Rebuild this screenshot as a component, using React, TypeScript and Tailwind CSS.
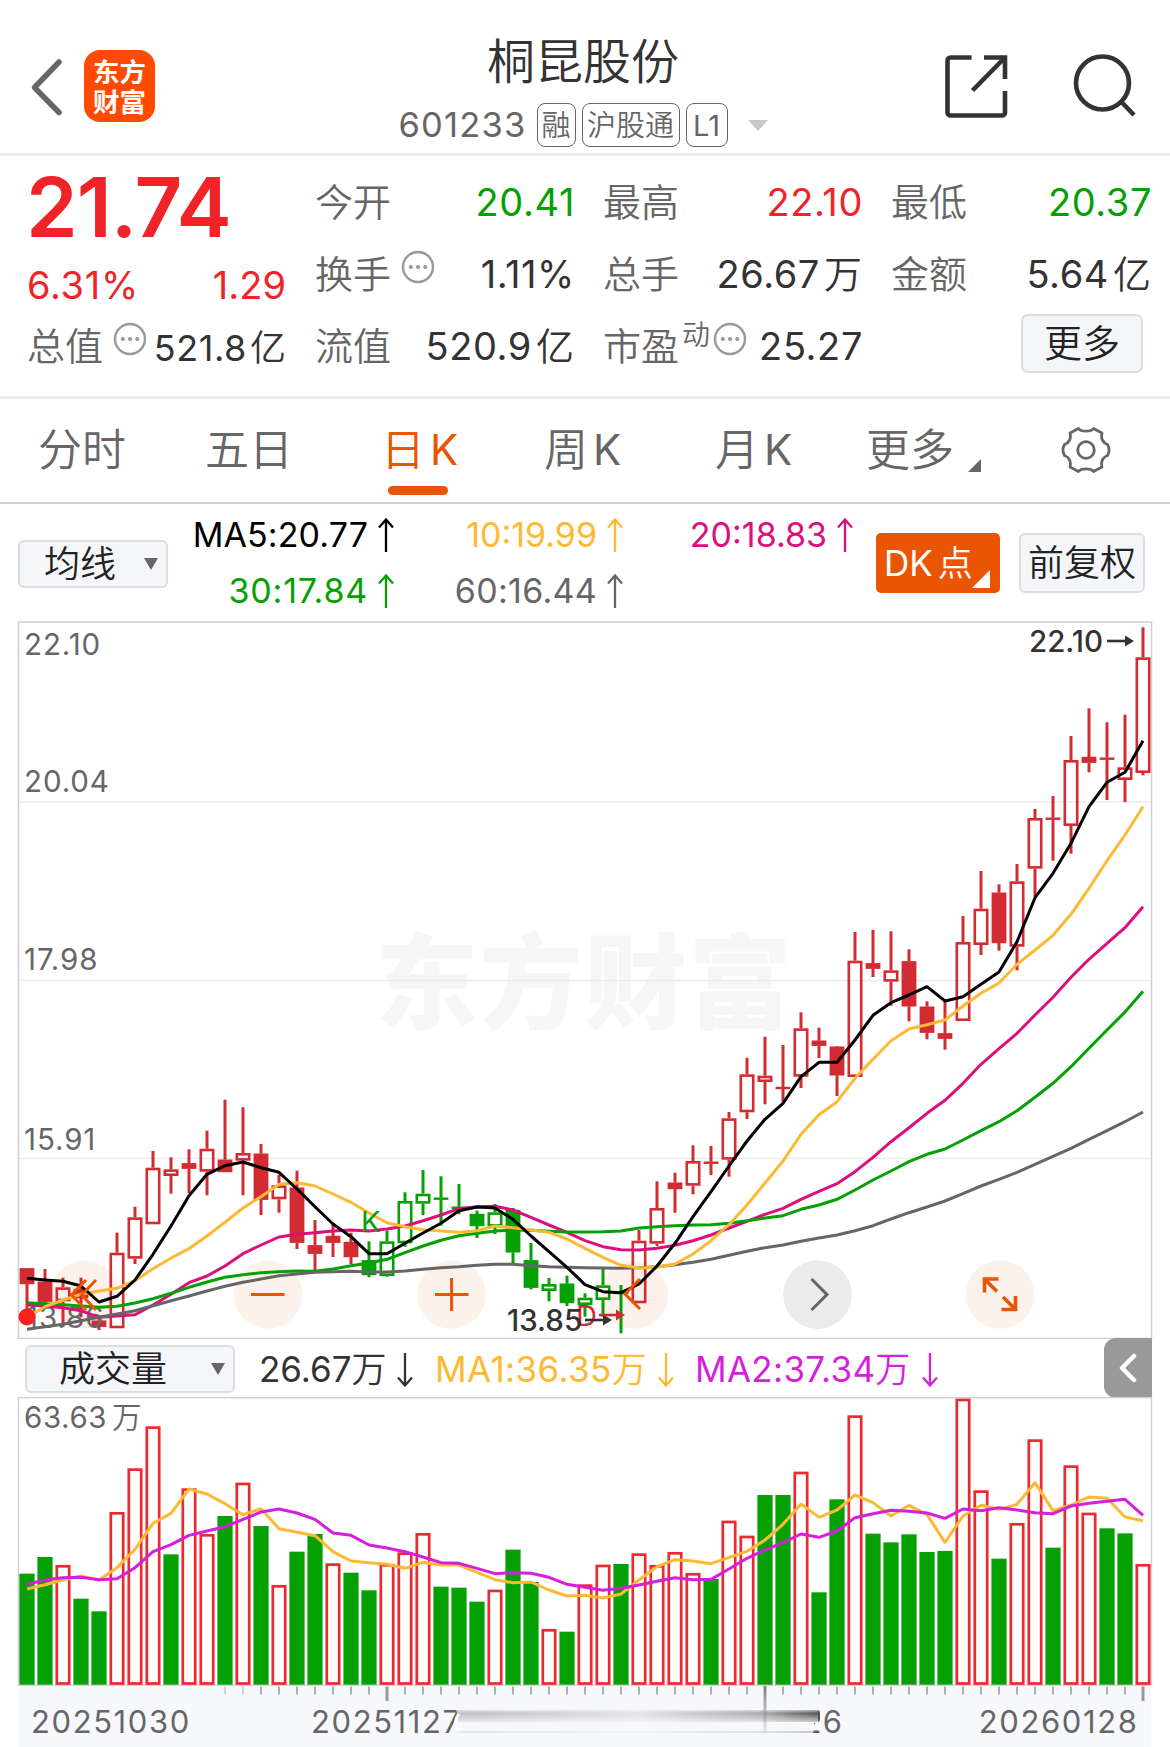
import type { ReactNode } from 'react';

type CandleKind = 'up' | 'solid';

interface Candle {
  kind: CandleKind;
  high: number;
  top: number;
  bottom: number;
  low: number;
}

const RED = '#d22b31';
const GREEN = '#04a004';
const ORANGE = '#ea5504';
const YELLOW = '#fdb934';
const MAGENTA = '#dc0f7d';
const PURPLE = '#d61fdc';

const STEP = 18;
const FIRST_X = 27;
const xAt = (i: number) => FIRST_X + i * STEP;

// candles 19-33 are inside the K..D window and are painted green
const isGreen = (i: number) => i >= 19 && i <= 33;

// [hollow ? 1 : 0, high, top, bottom, low]
const RAW_CANDLES: [number, number, number, number, number][] = [
  [0, 1268.3, 1268.3, 1284, 1313],
  [0, 1269, 1281.7, 1301.7, 1304],
  [1, 1277.7, 1287.3, 1301.3, 1326.7],
  [0, 1277.7, 1289, 1298, 1317.3],
  [0, 1315, 1320.7, 1326.7, 1330],
  [1, 1232.7, 1252.7, 1328.3, 1328.3],
  [1, 1206.7, 1217.3, 1258.7, 1264],
  [1, 1151, 1167.7, 1224.3, 1224.3],
  [1, 1157.3, 1169.3, 1176, 1193.7],
  [0, 1149.3, 1163.3, 1168.7, 1193],
  [1, 1130.7, 1148.7, 1171.7, 1195.3],
  [0, 1099.7, 1159.7, 1172, 1172],
  [1, 1107.3, 1153, 1160.7, 1195.3],
  [0, 1144, 1153.7, 1199.7, 1215],
  [1, 1175, 1185.3, 1199.3, 1212.7],
  [0, 1170.7, 1187.7, 1242.7, 1249],
  [0, 1220, 1245.3, 1253.7, 1270.7],
  [0, 1223.3, 1236, 1242.7, 1257],
  [0, 1232.7, 1242, 1257, 1264],
  [0, 1241.3, 1260.3, 1275, 1277.3],
  [1, 1230.7, 1241.3, 1276, 1276.7],
  [1, 1192.3, 1201, 1243.3, 1246.7],
  [1, 1170, 1193.7, 1203.7, 1215],
  [0, 1176.3, 1197.7, 1199.7, 1225.7],
  [0, 1184, 1206.7, 1209, 1214.3],
  [0, 1210.7, 1214, 1226, 1238],
  [1, 1204, 1212.3, 1226.7, 1234],
  [0, 1208, 1210, 1252.3, 1264],
  [0, 1243, 1260.3, 1287.7, 1289.3],
  [1, 1278, 1284, 1291, 1301.3],
  [0, 1275.7, 1283.7, 1303, 1306],
  [1, 1293.3, 1297.7, 1305, 1316.7],
  [1, 1267.3, 1285.3, 1300, 1316.7],
  [0, 1285, 1292, 1294, 1333.3],
  [1, 1230, 1240.7, 1303.3, 1303.3],
  [1, 1181.3, 1208, 1243.7, 1246],
  [0, 1172.7, 1182.7, 1189, 1212.7],
  [1, 1145.3, 1161, 1185.7, 1194.3],
  [0, 1146, 1161.7, 1163.7, 1175],
  [1, 1112, 1118.3, 1159.7, 1176.7],
  [1, 1057.7, 1074.3, 1112.3, 1119],
  [1, 1036.7, 1075.7, 1082, 1104.3],
  [0, 1045, 1087, 1089, 1101.7],
  [1, 1012.3, 1028.3, 1076.7, 1088],
  [0, 1027.7, 1040.7, 1045.7, 1058],
  [0, 1046, 1046.7, 1075.3, 1096],
  [1, 932, 960.7, 1077, 1077],
  [0, 930, 963.3, 968.7, 977],
  [1, 931.3, 970.3, 981.7, 1005.7],
  [0, 949.3, 961.3, 1006.3, 1021.3],
  [0, 1001.3, 1006.7, 1032.7, 1039.3],
  [0, 1000, 1033.3, 1038.7, 1049.7],
  [1, 916, 942, 1021, 1021],
  [1, 871, 908.7, 945, 955],
  [0, 884.3, 892.7, 943, 950.7],
  [1, 864, 881.3, 946.7, 970.3],
  [1, 809, 818, 868.7, 896.7],
  [0, 796, 817.7, 819.7, 860.7],
  [1, 736, 760, 826, 853.7],
  [0, 708.3, 757, 762.7, 772.3],
  [0, 722.3, 757.7, 759.7, 800],
  [1, 714.7, 767.3, 780, 802],
  [1, 627.3, 657.3, 773, 775.3],
];

const CANDLES: Candle[] = RAW_CANDLES.map(([hollow, high, top, bottom, low]) => ({
  kind: hollow ? 'up' : 'solid',
  high,
  top,
  bottom,
  low,
}));

const MA5 = [
  1278.3, 1280, 1281.3, 1286, 1302, 1296.3, 1280, 1254.3, 1226, 1195.7, 1174.3, 1165.7, 1162, 1167.7, 1172.3,
  1189, 1206.7, 1224, 1236.7, 1253.7, 1253.7, 1243.3, 1233, 1223.3, 1210.7, 1207, 1208, 1219.3, 1236, 1251.7,
  1267.3, 1284.7, 1291.7, 1292.7, 1284, 1266, 1243.3, 1216.7, 1191.7, 1166, 1141, 1119.3, 1103.3, 1076.7, 1062.3,
  1062.3, 1040, 1015.3, 1002.7, 995, 986.7, 1001, 996.7, 984.3, 972, 941.7, 897.7, 873.3, 843.3, 806.7, 782.3,
  772.3, 740.7,
];
const MA10 = [
  1317.3, 1306.7, 1300, 1294.3, 1291, 1288.3, 1280.7, 1268.7, 1258, 1248.7, 1236, 1222.3, 1208, 1196.7, 1184.3,
  1182.7, 1186, 1194, 1202.3, 1213, 1222.7, 1226.7, 1229.7, 1231, 1232.3, 1230.7, 1226, 1227.7, 1230, 1232.3,
  1239, 1248.3, 1257.3, 1265.3, 1268, 1267.3, 1264, 1254, 1240.7, 1224.7, 1205, 1183, 1161, 1134.3, 1114.7,
  1101.7, 1078.3, 1059.3, 1040.7, 1029, 1024.7, 1020, 1006, 993.3, 983, 964.3, 950, 935.3, 914.3, 888.3, 860.7,
  835, 806.7,
];
const MA20 = [
  1304.7, 1306, 1307.7, 1310.7, 1317.3, 1316, 1314.7, 1305, 1294.3, 1282.7, 1276, 1266, 1253.7, 1245, 1237,
  1234.3, 1232.7, 1231, 1230, 1231, 1229, 1226, 1220.7, 1215, 1208.7, 1206.7, 1206.3, 1210, 1217.3, 1225,
  1232.3, 1240.7, 1246.7, 1249.7, 1250, 1248.3, 1245.3, 1240.7, 1235, 1228, 1221.3, 1214.3, 1208.3, 1199.3,
  1191.3, 1183.7, 1171.7, 1157.3, 1141.7, 1127.7, 1113.3, 1100.3, 1083.3, 1064.3, 1048.7, 1033.3, 1015, 997.3,
  977.3, 959.3, 943.3, 927.7, 906.7,
];
const MA30 = [
  1302.7, 1303.7, 1304.7, 1306, 1307.3, 1306.3, 1303, 1298.7, 1293.3, 1287.3, 1282, 1277.3, 1274.7, 1272.7,
  1271.7, 1271, 1271.3, 1269, 1265.7, 1263, 1259.3, 1252.7, 1246, 1240.3, 1235.7, 1233.3, 1231, 1230, 1230.3,
  1231.3, 1232, 1232, 1231.7, 1231, 1228, 1226.7, 1225.7, 1225, 1224.7, 1223.3, 1220.7, 1218, 1215.7, 1209.3,
  1205, 1199.3, 1190, 1180, 1171, 1161.7, 1154.3, 1149, 1140, 1130.7, 1121.7, 1110.7, 1097.3, 1083.3, 1066.7,
  1048.3, 1030, 1012, 991.3,
];
const MA60 = [
  1329.3, 1326.7, 1324.3, 1320.7, 1317.3, 1314, 1310.7, 1305.7, 1300.7, 1296, 1291, 1286.3, 1282.3, 1279, 1275.7,
  1274, 1272.3, 1271.7, 1271.3, 1272, 1272, 1271, 1269.3, 1267.7, 1266.7, 1265.3, 1264.3, 1264.3, 1265.7, 1266.7,
  1267.3, 1267.7, 1268, 1268.3, 1267.7, 1266.7, 1264.7, 1262.3, 1259.3, 1255.3, 1251.3, 1247.7, 1245, 1241.3,
  1238, 1235, 1230.7, 1225.7, 1219, 1212.7, 1207, 1201, 1193.7, 1186, 1179.3, 1172.3, 1164.3, 1156.3, 1148.3,
  1139.3, 1130.7, 1121.7, 1112,
];

const PRICE_LINES = [
  { color: MAGENTA, values: MA20 },
  { color: GREEN, values: MA30 },
  { color: '#666666', values: MA60 },
  { color: YELLOW, values: MA10 },
  { color: '#000000', values: MA5 },
];

// bar tops in thirds of a pixel, negative = green bar
const VOLUME = [
  -581, -531, 555, -656, -694, 396, 265, 139, -523, 325, 462, -408, 308, -438, 615, -515, -462, 550, -578, -631,
  552, 517, 459, -620, -623, -665, 629, -509, -606, 747, -755, 613, 554, -552, 520, 555, 516, 579, -597, 422, 467,
  -345, -345, 275, -637, -358, 106, -461, -487, -463, -516, -513, 56, 331, -536, 429, 178, -503, 256, 398, -445,
  -460, 552,
];
const VOL_MA1 = [
  627, 614, 600, 588, 600, 563, 508, 430, 400, 327, 342, 371, 404, 386, 446, 457, 467, 515, 543, 548, 553, 565,
  547, 555, 555, 577, 599, 608, 606, 630, 648, 646, 654, 642, 600, 560, 539, 543, 551, 532, 514, 480, 433, 372,
  412, 390, 345, 368, 408, 376, 404, 487, 408, 376, 388, 373, 308, 392, 375, 351, 355, 411, 422,
];
const VOL_MA2 = [
  613, 600, 593, 592, 599, 596, 563, 515, 494, 466, 453, 440, 418, 396, 387, 399, 418, 459, 466, 495, 504, 515,
  531, 548, 550, 565, 581, 578, 580, 592, 613, 622, 631, 625, 615, 604, 593, 599, 598, 567, 535, 510, 488, 462,
  472, 453, 413, 401, 391, 394, 399, 415, 387, 392, 383, 390, 398, 401, 378, 370, 364, 358, 406,
];
const volY = (v: number) => 1380 + Math.abs(v) / 3;

const toPoints = (values: number[]) => values.map((y, i) => `${xAt(i)},${y}`).join(' ');

function DotsIcon({ className }: { className: string }) {
  return (
    <svg viewBox="0 0 34 34" className={`h-[34px] w-[34px] shrink-0 ${className}`}>
      <circle cx="17" cy="17" r="15" fill="none" stroke="#999" strokeWidth="2.4" />
      <circle cx="9.8" cy="17" r="2.1" fill="#999" />
      <circle cx="17" cy="17" r="2.1" fill="#999" />
      <circle cx="24.2" cy="17" r="2.1" fill="#999" />
    </svg>
  );
}

function Header() {
  return (
    <header className="flex h-[156px] items-start justify-between border-b-[3px] border-[#ededed] pl-[30px] pr-[34px]">
      <div className="flex w-[328px] pt-[50px]">
        <svg viewBox="0 0 34 60" className="mt-[7px] h-[60px] w-[34px]" fill="none" stroke="#666" strokeWidth="5.5">
          <path d="M29 5 L4.500 30.500 L29 55.500" strokeLinecap="round" strokeLinejoin="round" />
        </svg>
        <div className="ml-5 flex h-[72px] w-[71px] flex-col items-center justify-center rounded-[16px] bg-[#ff4a00] font-['Noto_Sans_CJK_SC',sans-serif] text-[26.5px] font-bold leading-[30px] text-white">
          <span>东方</span>
          <span>财富</span>
        </div>
      </div>
      <div className="flex flex-col items-center pt-[37px]">
        <h1 className="text-[48px] leading-[50px] text-[#333]">桐昆股份</h1>
        <div className="mt-[16px] flex items-center text-[29px] leading-none text-[#666]">
          <span className="mr-[10px] text-[34.5px] tracking-[1.2px]">601233</span>
          <span className="flex h-[44px] w-[39px] items-center justify-center rounded-[8px] border-[1.5px] border-[#666]">融</span>
          <span className="ml-[6px] flex h-[44px] w-[98px] items-center justify-center rounded-[8px] border-[1.5px] border-[#666]">
            沪股通
          </span>
          <span className="ml-[6px] flex h-[44px] w-[42px] items-center justify-center rounded-[8px] border-[1.5px] border-[#666]">
            L1
          </span>
          <svg viewBox="0 0 20 11" className="ml-5 h-[11px] w-[20px]">
            <path d="M0 0H20L10 11Z" fill="#c8c8c8" />
          </svg>
        </div>
      </div>
      <div className="flex w-[328px] justify-end gap-[61px] pt-[53px]">
        <svg viewBox="0 0 66 68" className="h-[68px] w-[66px]" fill="none" stroke="#333" strokeWidth="4.600">
          <path d="M28.500 4.500H7.500A3 3 0 0 0 4.500 7.500V59.500A3 3 0 0 0 7.500 62.500H59A3 3 0 0 0 62 59.500V38" />
          <path d="M41 4.500H62V26M62 4.500L29.500 37.500" />
        </svg>
        <svg viewBox="0 0 66 68" className="h-[68px] w-[66px]" fill="none" stroke="#333" strokeWidth="4.600">
          <circle cx="32.500" cy="30" r="26.500" />
          <path d="M51 48.500L64 62" />
        </svg>
      </div>
    </header>
  );
}

function Cell({ label, extra, value, unit, color = 'text-[#333]' }: {
  label: string;
  extra?: ReactNode;
  value: string;
  unit?: string;
  color?: string;
}) {
  return (
    <div className="flex h-[72px] items-center justify-between">
      <div className="flex items-center text-[#666]">
        <span>{label}</span>
        {extra}
      </div>
      <div className={`flex gap-[4px] ${color}`}>
        <span className="-mr-px tracking-[0.6px]">{value}</span>
        {unit && <span className="pl-px">{unit}</span>}
      </div>
    </div>
  );
}

function QuotePanel() {
  return (
    <section className="grid h-[243px] grid-cols-[259px_259px_259px_260px] content-start gap-x-[29px] border-b-[3px] border-[#ededed] pl-[27px] pt-[10px] text-[38px] leading-none">
      <div className="row-span-2 flex flex-col text-[#f02428]">
        <div className="-ml-px pt-px text-[83px] font-semibold leading-[80px] tracking-[-1px]">21.74</div>
        <div className="flex justify-between pt-[19px]">
          <span className="tracking-[0.7px]">6.31%</span>
          <span>1.29</span>
        </div>
      </div>
      <Cell label="今开" value="20.41" color="text-[#04a004]" />
      <Cell label="最高" value="22.10" color="text-[#f02428]" />
      <Cell label="最低" value="20.37" color="text-[#04a004]" />
      <Cell label="换手" extra={<DotsIcon className="-mt-[14px] ml-[10px]" />} value="1.11%" />
      <Cell label="总手" value="26.67" unit="万" />
      <Cell label="金额" value="5.64" unit="亿" />
      <div className="flex h-[72px] items-center justify-between">
        <div className="flex items-center text-[#666]">
          <span>总值</span>
          <DotsIcon className="-mt-[14px] ml-[10px]" />
        </div>
        <div className="flex gap-[3px] pt-1 text-[36px] text-[#333]">
          <span className="tracking-[0.6px]">521.8</span>
          <span>亿</span>
        </div>
      </div>
      <Cell label="流值" value="520.9" unit="亿" />
      <Cell
        label="市盈"
        extra={
          <>
            <span className="-mt-[22px] ml-[3px] text-[28px]">动</span>
            <DotsIcon className="-mt-[14px] ml-[3px]" />
          </>
        }
        value="25.27"
      />
      <div className="flex h-[72px] items-center justify-end pb-[6px] pr-[8px]">
        <button className="h-[59px] w-[122px] rounded-[7px] border-2 border-[#dcdde0] bg-[#f5f6fa] text-[38px] leading-none text-[#222]">
          更多
        </button>
      </div>
    </section>
  );
}

function Tabs() {
  return (
    <nav className="flex h-[105px] items-start border-b-2 border-[#d0d0d0] pl-[38px] pt-[28px] text-[44px] leading-[46px] text-[#666]">
      <span className="w-[167px]">分时</span>
      <span className="w-[176px]">五日</span>
      <div className="flex w-[163px] flex-col text-[#ea5504]">
        <span className="flex gap-[5px]">
          日<span className="text-[42px]">K</span>
        </span>
        <span className="ml-[7px] mt-[13px] h-[9px] w-[60px] rounded-full bg-[#ea5504]" />
      </div>
      <span className="flex w-[171px] gap-[5px]">
        周<span className="text-[42px]">K</span>
      </span>
      <span className="flex w-[151px] gap-[5px]">
        月<span className="text-[42px]">K</span>
      </span>
      <span className="w-[102px]">更多</span>
      <svg viewBox="0 0 14 14" className="mt-[32px] h-[14px] w-[14px]">
        <path d="M13 0V13H0Z" fill="#666" />
      </svg>
      <svg viewBox="0 0 50 50" className="ml-[79px] mt-[-2px] h-[50px] w-[50px]" fill="none" stroke="#666" strokeWidth="2.800">
        <path
          strokeLinejoin="round"
          d="M17.500 3.500C20 7 30 7 32.500 3.500L41 8C39.500 13.500 42 18 46.500 19.500C48.500 23 48.500 27 46.500 30.500C42 32 39.500 36.500 41 42L32.500 46.500C30 43 20 43 17.500 46.500L9 42C10.500 36.500 8 32 3.500 30.500C1.500 27 1.500 23 3.500 19.500C8 18 10.500 13.500 9 8Z"
        />
        <circle cx="25" cy="25" r="8.300" />
      </svg>
    </nav>
  );
}

function Arrow({ down = false }: { down?: boolean }) {
  return (
    <svg
      viewBox="0 0 16 34"
      className={`h-[34px] w-[16px] shrink-0 ${down ? 'rotate-180' : ''}`}
      fill="none"
      stroke="currentColor"
      strokeWidth="2.300"
    >
      <path d="M8 34V2M1 9.500L8 1.500L15 9.500" />
    </svg>
  );
}

function MaLabel({ text, className }: { text: string; className: string }) {
  return (
    <div className={`flex items-center justify-end gap-[10px] ${className}`}>
      <span>{text}</span>
      <Arrow />
    </div>
  );
}

function MaBar() {
  return (
    <section className="flex h-[118px] items-start pl-[18px]">
      <button className="mt-[36px] flex h-[48px] w-[150px] items-center justify-between rounded-[6px] border-2 border-[#dcdde0] bg-[#f5f6fa] pl-[24px] pr-[8px] text-[36px] leading-none text-[#222]">
        均线
        <svg viewBox="0 0 14 12" className="h-[12px] w-[14px]">
          <path d="M0 0H14L7 12Z" fill="#666" />
        </svg>
      </button>
      <div className="grid grid-cols-[226px_229px_230px] pt-[3px] text-[34px] leading-[56px]">
        <MaLabel text="MA5:20.77" className="tracking-[0.1px] text-black" />
        <MaLabel text="10:19.99" className="text-[#fdb934]" />
        <MaLabel text="20:18.83" className="text-[#dc0f7d]" />
        <MaLabel text="30:17.84" className="tracking-[0.8px] text-[#04a004]" />
        <MaLabel text="60:16.44" className="tracking-[0.3px] text-[#666]" />
      </div>
      <button className="ml-[23px] mt-[29px] flex h-[60px] w-[124px] items-center rounded-[5px] bg-[#ea5504] pl-[8px] text-[35px] leading-none text-white">
        <span>DK</span>
        <span className="ml-[5px]">点</span>
        <svg viewBox="0 0 18 18" className="-ml-[1px] mt-[32px] h-[18px] w-[18px] shrink-0">
          <path d="M18 0V18H0Z" fill="#fff" />
        </svg>
      </button>
      <button className="ml-[19px] mt-[29px] h-[60px] w-[126px] rounded-[6px] border-2 border-[#dcdde0] bg-[#f5f6fa] text-[36px] leading-none text-[#222]">
        前复权
      </button>
    </section>
  );
}

function CandleShape({ candle, index }: { candle: Candle; index: number }) {
  const color = isGreen(index) ? GREEN : RED;
  const x = xAt(index);
  const { high, top, bottom, low } = candle;
  return (
    <g stroke={color} strokeWidth="3">
      {high < top && <line x1={x} x2={x} y1={high} y2={top} />}
      {low > bottom && <line x1={x} x2={x} y1={bottom} y2={low} />}
      {candle.kind === 'up' ? (
        <rect x={x - 6.2} y={top + 1.3} width="12.4" height={bottom - top - 2.6} fill="none" strokeWidth="2.600" />
      ) : (
        <rect x={x - 7.4} y={top - 0.2} width="14.8" height={bottom - top + 0.4} fill={color} stroke="none" />
      )}
    </g>
  );
}

function PriceChart() {
  return (
    <svg viewBox="0 621 1170 718" className="block h-[718px] w-[1170px]">
      <text
        x="375"
        y="1021"
        fontSize="103"
        letterSpacing="1.500"
        fill="#f6f6f6"
        className="font-['Noto_Sans_CJK_SC',sans-serif] font-black"
      >
        东方财富
      </text>
      <rect x="18.500" y="622" width="1133" height="716.500" fill="none" stroke="#d0d1d4" strokeWidth="1.600" />
      {[802, 980.5, 1158.5].map((y) => (
        <line key={y} x1="19" x2="1151" y1={y} y2={y} stroke="#ececef" strokeWidth="1.600" />
      ))}

      {[85, 268, 451.6, 634, 1000].map((cx) => (
        <circle key={cx} cx={cx} cy="1294.600" r="34.300" fill={ORANGE} fillOpacity="0.08" />
      ))}
      <circle cx="817.500" cy="1294.600" r="34.300" fill="#ebebeb" />

      {CANDLES.map((candle, i) => (
        <CandleShape key={i} candle={candle} index={i} />
      ))}

      <g fill="#666" fontSize="29.500" letterSpacing="0.900">
        <text x="24" y="655">22.10</text>
        <text x="24" y="792">20.04</text>
        <text x="24" y="970">17.98</text>
        <text x="24" y="1149.500">15.91</text>
        <text x="26" y="1328">13.86</text>
      </g>

      {PRICE_LINES.map((line) => (
        <polyline
          key={line.color}
          points={toPoints(line.values)}
          fill="none"
          stroke={line.color}
          strokeWidth="3"
          strokeLinejoin="round"
        />
      ))}
      <circle cx="27" cy="1317" r="8.500" fill="#ff1f1f" />

      <text x="361" y="1232" fontSize="29" fill={GREEN}>K</text>
      <text x="576" y="1326" fontSize="29" fill={RED}>D</text>
      <g fontSize="29.500" fontWeight="500" fill="#333">
        <text x="1029" y="652">22.10</text>
        <text x="507" y="1331">13.85</text>
      </g>
      <g fill="#333" stroke="#333">
        <path d="M1107 641H1128" strokeWidth="2.600" />
        <path d="M1125 635.500L1134 641L1125 646.500Z" stroke="none" />
        <path d="M585 1320H605" strokeWidth="2.600" />
        <path d="M603 1314.500L612 1320L603 1325.500Z" stroke="none" />
      </g>
      <path d="M599 1315H618" stroke={RED} strokeWidth="2.600" />
      <path d="M616 1309.500L625 1315L616 1320.500Z" fill={RED} />

      <g fill="none" stroke={ORANGE} strokeWidth="3">
        <path d="M86 1280L71.500 1295L86 1310M96 1280L81.500 1295L96 1310" />
        <path d="M251 1294.600H284.500" />
        <path d="M435 1294.600H468.500M451.600 1278V1311" />
        <path d="M640 1279L625 1294L640 1309" />
        <path
          strokeWidth="3.600"
          d="M998.500 1279H984.500V1292.500M984.500 1279L997 1291.500M1001.500 1309.500H1015.500V1296M1015.500 1309.500L1003 1297"
        />
      </g>
      <path d="M811.500 1279L827 1294.600L811.500 1310" fill="none" stroke="#666" strokeWidth="3" />
    </svg>
  );
}

function VolumeBar() {
  return (
    <section className="flex h-[58px] items-center pl-[25px] text-[35px] leading-none">
      <button className="mt-px flex h-[48px] w-[210px] shrink-0 items-center justify-between rounded-[6px] border-2 border-[#dcdde0] bg-[#f5f6fa] pl-[32px] pr-[8px] text-[36px] leading-none text-[#222]">
        成交量
        <svg viewBox="0 0 14 12" className="h-[12px] w-[14px]">
          <path d="M0 0H14L7 12Z" fill="#666" />
        </svg>
      </button>
      <div className="flex w-[178px] items-center justify-between pl-[24px] pt-[3px] text-[#333]">
        <span>26.67万</span>
        <Arrow down />
      </div>
      <div className="flex w-[261px] items-center justify-between pl-[22px] pt-[3px] tracking-[0.4px] text-[#fdb934]">
        <span>MA1:36.35万</span>
        <Arrow down />
      </div>
      <div className="flex w-[264px] items-center justify-between pl-[21px] pt-[3px] tracking-[0.3px] text-[#d61fdc]">
        <span>MA2:37.34万</span>
        <Arrow down />
      </div>
      <div className="ml-[166px] flex h-[60px] w-[48px] shrink-0 items-center justify-center rounded-l-[12px] bg-[#999]">
        <svg viewBox="0 0 20 30" className="h-[30px] w-[20px]" fill="none" stroke="#fff" strokeWidth="4.500">
          <path d="M16 3L4 15L16 27" strokeLinecap="round" strokeLinejoin="round" />
        </svg>
      </div>
    </section>
  );
}

function VolumeChart() {
  return (
    <svg viewBox="0 1397 1170 350" className="block h-[350px] w-[1170px]">
      <defs>
        <linearGradient id="bandX" x1="0" x2="1">
          <stop offset="0" stopColor="#bdbdc0" />
          <stop offset="0.5" stopColor="#e3e3e6" />
          <stop offset="0.85" stopColor="#a8a8aa" />
          <stop offset="1" stopColor="#505050" />
        </linearGradient>
        <linearGradient id="bandY" x1="0" x2="0" y1="0" y2="1">
          <stop offset="0" stopColor="#f7f8fb" stopOpacity="0.8" />
          <stop offset="0.3" stopColor="#f7f8fb" stopOpacity="0" />
          <stop offset="1" stopColor="#f7f8fb" stopOpacity="0.8" />
        </linearGradient>
        <linearGradient id="tickFade" x1="0" x2="0" y1="0" y2="1">
          <stop offset="0" stopColor="#888" />
          <stop offset="1" stopColor="#888" stopOpacity="0.1" />
        </linearGradient>
      </defs>
      <rect x="18" y="1685" width="1133.500" height="62" fill="#f7f8fb" />
      <rect x="18.500" y="1397.700" width="1133" height="287.500" fill="none" stroke="#d0d1d4" strokeWidth="1.400" />
      <text x="24" y="1428" fontSize="29.500" letterSpacing="0.600" fill="#666">63.63</text>
      <text x="112" y="1428" fontSize="29.500" fill="#666">万</text>

      {VOLUME.map((v, i) => {
        const x = xAt(i);
        const y = volY(v);
        return v < 0 ? (
          <rect key={i} x={x - 7.6} y={y} width="15.2" height={1684.7 - y} fill={GREEN} />
        ) : (
          <rect key={i} x={x - 6.2} y={y + 1.3} width="12.4" height={1682.2 - y} fill="#fff" stroke="#ea2a2e" strokeWidth="2.700" />
        );
      })}
      <polyline points={toPoints(VOL_MA1.map(volY))} fill="none" stroke={YELLOW} strokeWidth="3" strokeLinejoin="round" />
      <polyline points={toPoints(VOL_MA2.map(volY))} fill="none" stroke={PURPLE} strokeWidth="3" strokeLinejoin="round" />

      {VOLUME.map((_, i) => {
        if (i < 11) return null;
        const major = i === 20 || i === 62;
        return (
          <line
            key={i}
            x1={xAt(i)}
            x2={xAt(i)}
            y1="1686.500"
            y2={major ? 1701 : 1694.5}
            stroke="#999"
            strokeWidth={major ? 3 : 1.5}
            strokeOpacity={i < 13 ? 0.5 : 1}
          />
        );
      })}

      <g fontSize="31" fill="#666" letterSpacing="1.600">
        <text x="31" y="1733">20251030</text>
        <text x="311" y="1733">20251127</text>
        <text x="843.500" y="1733" textAnchor="end">26</text>
        <text x="1138.500" y="1733" textAnchor="end">20260128</text>
      </g>
      <rect x="457" y="1708" width="357" height="29" rx="8" fill="#f7f8fb" />
      <rect x="457" y="1710" width="363" height="12" rx="3" fill="url(#bandX)" />
      <rect x="456" y="1709" width="362" height="14" fill="url(#bandY)" />
      <rect x="457" y="1731" width="363" height="2" fill="url(#bandX)" fillOpacity="0.3" />
      <path d="M459 1714C454 1720 455 1728 460 1731" fill="none" stroke="#fff" strokeWidth="3" />
      <rect x="763.500" y="1686" width="3" height="48" fill="url(#tickFade)" />
    </svg>
  );
}

export default function App() {
  return (
    <div className="flex h-[1747px] w-[1170px] flex-col overflow-hidden bg-white font-['Inter','Noto_Sans_CJK_SC_DemiLight','Noto_Sans_CJK_SC_Light','Noto_Sans_CJK_SC',sans-serif]">
      <Header />
      <QuotePanel />
      <Tabs />
      <MaBar />
      <div className="-mt-px">
        <PriceChart />
      </div>
      <VolumeBar />
      <VolumeChart />
    </div>
  );
}
